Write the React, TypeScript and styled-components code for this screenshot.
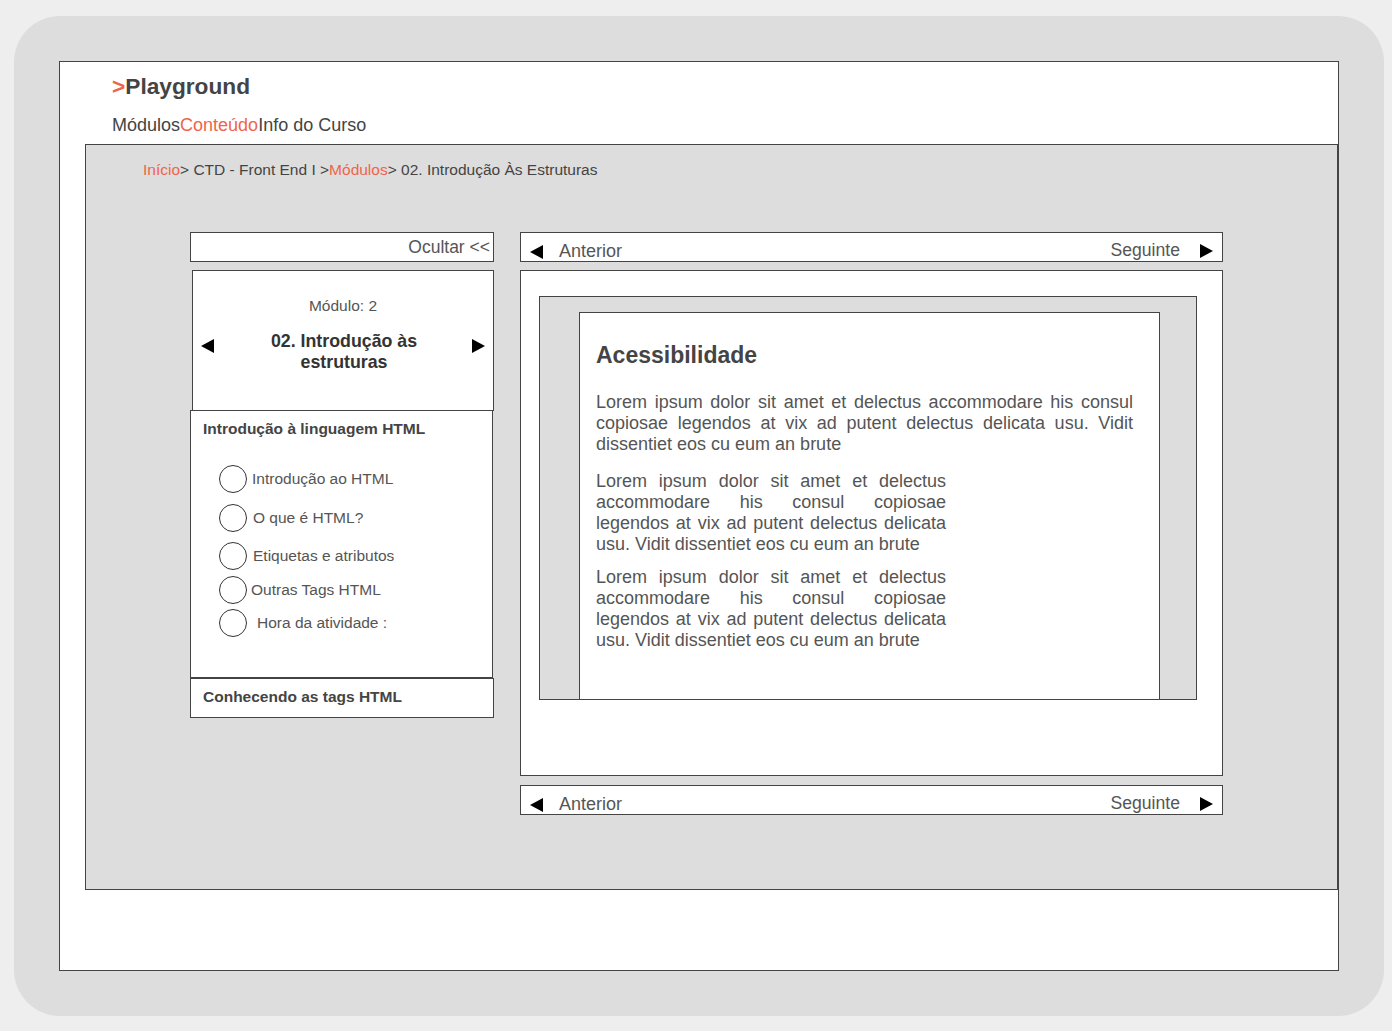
import React from "react";
import styled, { createGlobalStyle } from "styled-components";

const GlobalStyle = createGlobalStyle`
  html, body { margin: 0; padding: 0; background: #eeeeee; }
  body { font-family: "Liberation Sans", Arial, sans-serif; color: #444; }
  * { box-sizing: border-box; }
`;

const ACCENT = "#f0644b";
const LINE = "#444";

const Device = styled.div`
  margin: 16px 0 0 14px;
  width: 1370px;
  height: 1000px;
  padding: 45px;
  background: #dddddd;
  border-radius: 46px;
`;

const Frame = styled.div`
  width: 1280px;
  height: 910px;
  background: #fff;
  border: 1px solid ${LINE};
  display: flex;
  flex-direction: column;
`;

const Header = styled.header`
  padding: 11px 0 0 52px;
  display: flex;
  flex-direction: column;
`;

const Title = styled.h1`
  margin: 0;
  font-size: 22.7px;
  line-height: 26px;
  font-weight: 700;
  color: #444;
`;

const Accent = styled.span`
  color: ${ACCENT};
`;

const TopNav = styled.nav`
  margin-top: 16px;
  font-size: 18px;
  line-height: 21px;
  color: #444;
  display: flex;
`;

const NavLink = styled.span<{ $active?: boolean }>`
  color: ${(p) => (p.$active ? ACCENT : "#444")};
`;

const Panel = styled.main`
  margin: 8px 0 0 25px;
  width: 1253px;
  height: 746px;
  background: #dddddd;
  border: 1px solid ${LINE};
  padding: 16px 0 0 104px;
  display: flex;
  flex-direction: column;
`;

const Breadcrumb = styled.div`
  margin-left: -47px;
  font-size: 15.5px;
  line-height: 18px;
  color: #444;
`;

const Columns = styled.div`
  margin-top: 53px;
  display: flex;
  gap: 26px;
  align-items: flex-start;
`;

const Sidebar = styled.aside`
  width: 304px;
  display: flex;
  flex-direction: column;
`;

const HideBar = styled.div`
  height: 30px;
  background: #fff;
  border: 1px solid ${LINE};
  display: flex;
  justify-content: flex-end;
  align-items: center;
  padding: 0 3px 0 0;
  font-size: 17.5px;
  color: #555;
`;

const ModuleBox = styled.div`
  margin: 8px 0 0 2px;
  width: 302px;
  height: 141px;
  background: #fff;
  border: 1px solid ${LINE};
  display: flex;
  flex-direction: column;
  align-items: center;
  padding-top: 25px;
`;

const ModuleLabel = styled.div`
  font-size: 15.5px;
  line-height: 19px;
  color: #555;
`;

const ModuleRow = styled.div`
  margin-top: 16px;
  width: 100%;
  display: flex;
  align-items: flex-start;
  justify-content: space-between;
  padding: 0 8px 0 8px;
`;

const ModuleTitle = styled.div`
  font-size: 17.8px;
  line-height: 21px;
  font-weight: 700;
  color: #333;
  text-align: center;
  width: 220px;
  margin-left: 2px;
`;

const ArrowSlot = styled.div`
  margin-top: 8px;
`;

const LessonBox = styled.div`
  margin-top: -1px;
  width: 303px;
  height: 268px;
  background: #fff;
  border: 1px solid ${LINE};
  padding: 8px 0 0 12px;
  display: flex;
  flex-direction: column;
`;

const SectionTitle = styled.div`
  font-size: 15.5px;
  line-height: 19px;
  font-weight: 700;
  color: #444;
`;

const LessonList = styled.ul`
  list-style: none;
  margin: 27px 0 0 16px;
  padding: 0;
  display: flex;
  flex-direction: column;
`;

const LessonItem = styled.li<{ $top: number; $gap: number }>`
  margin-top: ${(p) => p.$top}px;
  display: flex;
  align-items: center;
  gap: ${(p) => p.$gap}px;
  font-size: 15.5px;
  color: #555;
  height: 28px;
`;

const Circle = styled.span`
  width: 28px;
  height: 28px;
  border-radius: 50%;
  border: 1px solid #333;
  flex: none;
`;

const TagsBox = styled.div`
  margin-top: 0;
  height: 40px;
  background: #fff;
  border: 1px solid ${LINE};
  padding: 0 0 3px 12px;
  display: flex;
  align-items: center;
`;

const Main = styled.section`
  width: 703px;
  display: flex;
  flex-direction: column;
`;

const PageNav = styled.div<{ $top: number }>`
  margin-top: ${(p) => p.$top}px;
  height: 30px;
  background: #fff;
  border: 1px solid ${LINE};
  display: flex;
  align-items: flex-start;
  justify-content: space-between;
  padding: 8px 9px 0 9px;
  font-size: 18px;
  line-height: 21px;
  color: #555;
`;

const NavSide = styled.div<{ $gap: number; $shift?: number }>`
  display: flex;
  align-items: center;
  gap: ${(p) => p.$gap}px;
  margin-top: ${(p) => p.$shift ?? 0}px;
`;

const NavLabel = styled.span<{ $size?: number }>`
  font-size: ${(p) => p.$size ?? 18}px;
`;

const Arrow = styled.svg`
  width: 14px;
  height: 14px;
  display: block;
  fill: #000;
  flex: none;
`;

const ContentBox = styled.div`
  margin-top: 8px;
  height: 506px;
  background: #fff;
  border: 1px solid ${LINE};
  padding: 25px 25px 0 18px;
`;

const Stage = styled.div`
  height: 404px;
  background: #dddddd;
  border: 1px solid ${LINE};
  padding: 15px 36px 0 39px;
  display: flex;
`;

const Card = styled.article`
  flex: 1;
  background: #fff;
  border: 1px solid ${LINE};
  border-bottom: none;
  padding: 29px 26px 0 16px;
`;

const CardTitle = styled.h2`
  margin: 0;
  font-size: 23px;
  line-height: 26px;
  font-weight: 700;
  color: #444;
`;

const Para = styled.p<{ $width?: number; $top: number }>`
  margin: ${(p) => p.$top}px 0 0 0;
  width: ${(p) => (p.$width ? `${p.$width}px` : "auto")};
  font-size: 18px;
  line-height: 21px;
  color: #555;
  text-align: justify;
`;

const LeftArrow = () => (
  <Arrow viewBox="0 0 14 14">
    <polygon points="13,0 13,14 0,7" />
  </Arrow>
);

const RightArrow = () => (
  <Arrow viewBox="0 0 14 14">
    <polygon points="1,0 1,14 14,7" />
  </Arrow>
);

const LOREM =
  "Lorem ipsum dolor sit amet et delectus accommodare his consul copiosae legendos at vix ad putent delectus delicata usu. Vidit dissentiet eos cu eum an brute";

const lessons = [
  { label: "Introdução ao HTML", top: 0, gap: 5 },
  { label: "O que é HTML?", top: 11, gap: 6 },
  { label: "Etiquetas e atributos", top: 10, gap: 6 },
  { label: "Outras Tags HTML", top: 6, gap: 4 },
  { label: "Hora da atividade :", top: 5, gap: 10 },
];

const Pager = ({ top }: { top: number }) => (
  <PageNav $top={top}>
    <NavSide $gap={15}>
      <LeftArrow />
      <NavLabel>Anterior</NavLabel>
    </NavSide>
    <NavSide $gap={19} $shift={-1}>
      <NavLabel $size={17.6}>Seguinte</NavLabel>
      <RightArrow />
    </NavSide>
  </PageNav>
);

export default function App() {
  return (
    <>
      <GlobalStyle />
      <Device>
        <Frame>
          <Header>
            <Title>
              <Accent>&gt;</Accent>Playground
            </Title>
            <TopNav>
              <NavLink>Módulos</NavLink>
              <NavLink $active>Conteúdo</NavLink>
              <NavLink>Info do Curso</NavLink>
            </TopNav>
          </Header>
          <Panel>
            <Breadcrumb>
              <Accent>Início</Accent>&gt; CTD - Front End I &gt;
              <Accent>Módulos</Accent>&gt; 02. Introdução Às Estruturas
            </Breadcrumb>
            <Columns>
              <Sidebar>
                <HideBar>Ocultar &lt;&lt;</HideBar>
                <ModuleBox>
                  <ModuleLabel>Módulo: 2</ModuleLabel>
                  <ModuleRow>
                    <ArrowSlot>
                      <LeftArrow />
                    </ArrowSlot>
                    <ModuleTitle>
                      02. Introdução às
                      <br />
                      estruturas
                    </ModuleTitle>
                    <ArrowSlot>
                      <RightArrow />
                    </ArrowSlot>
                  </ModuleRow>
                </ModuleBox>
                <LessonBox>
                  <SectionTitle>Introdução à linguagem HTML</SectionTitle>
                  <LessonList>
                    {lessons.map((l) => (
                      <LessonItem key={l.label} $top={l.top} $gap={l.gap}>
                        <Circle />
                        <span>{l.label}</span>
                      </LessonItem>
                    ))}
                  </LessonList>
                </LessonBox>
                <TagsBox>
                  <SectionTitle>Conhecendo as tags HTML</SectionTitle>
                </TagsBox>
              </Sidebar>
              <Main>
                <Pager top={0} />
                <ContentBox>
                  <Stage>
                    <Card>
                      <CardTitle>Acessibilidade</CardTitle>
                      <Para $top={24}>{LOREM}</Para>
                      <Para $top={16} $width={350}>
                        {LOREM}
                      </Para>
                      <Para $top={12} $width={350}>
                        {LOREM}
                      </Para>
                    </Card>
                  </Stage>
                </ContentBox>
                <Pager top={9} />
              </Main>
            </Columns>
          </Panel>
        </Frame>
      </Device>
    </>
  );
}
